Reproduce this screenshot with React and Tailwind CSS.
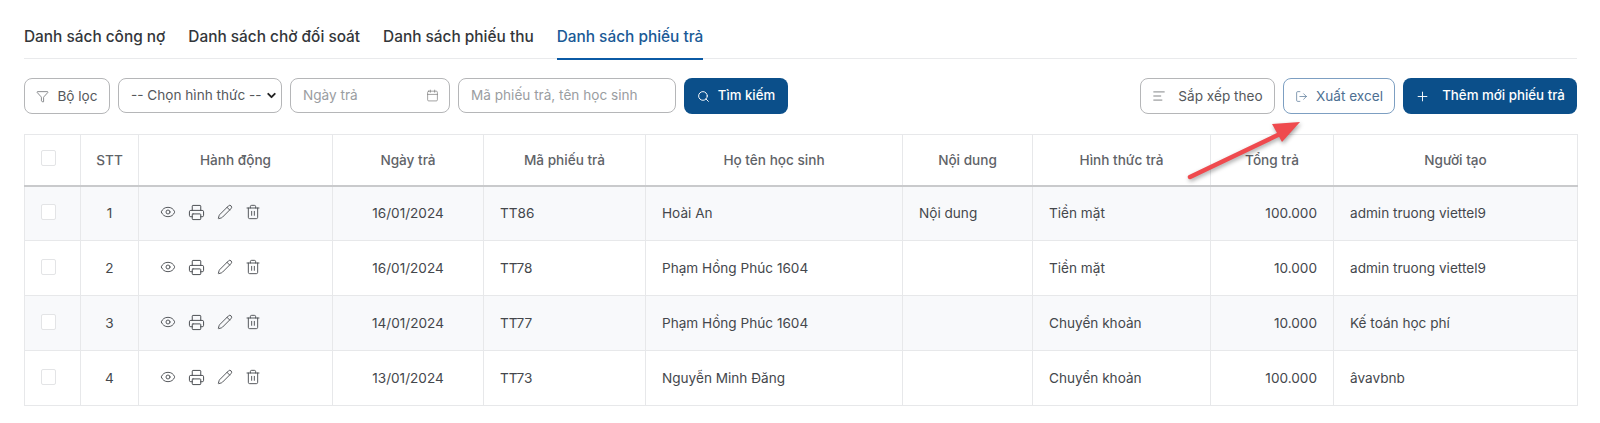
import React from "react";
import { Eye, Printer, Pencil, Trash2, Funnel, Calendar, Search, AlignLeft, LogOut, Plus, ChevronDown } from "lucide-react";

const rows = [
  ["1", "16/01/2024", "TT86", "Hoài An", "Nội dung", "Tiền mặt", "100.000", "admin truong viettel9", "bg-[#f8f9fb]"],
  ["2", "16/01/2024", "TT78", "Phạm Hồng Phúc 1604", "", "Tiền mặt", "10.000", "admin truong viettel9", "bg-white"],
  ["3", "14/01/2024", "TT77", "Phạm Hồng Phúc 1604", "", "Chuyển khoản", "10.000", "Kế toán học phí", "bg-[#f8f9fb]"],
  ["4", "13/01/2024", "TT73", "Nguyễn Minh Đăng", "", "Chuyển khoản", "100.000", "âvavbnb", "bg-white"],
];

const th = "border-r border-[#e7e8ea] font-medium text-[13.6px] text-[#5f6368] text-center";
const td = "border-r border-t border-[#e7e8ea] text-[13.6px] text-[#44474c] px-4";

function Checkbox() {
  return <div className="w-[15px] h-[16px] ml-4 -mt-[3px] bg-white border border-[#e3e4e6] rounded-[2px]" />;
}

export default function App() {
  return (
    <div className="relative w-[1600px] h-[423px] bg-white overflow-hidden font-['Inter',sans-serif] pl-6 pr-[23px]">
      <div className="flex gap-[23px] h-[59px] pt-[25px] border-b border-[#e9eaec] text-[15.4px] font-medium text-[#33363a]">
        <div>Danh sách công nợ</div>
        <div>Danh sách chờ đối soát</div>
        <div>Danh sách phiếu thu</div>
        <div className="h-[35px] text-[#1a5a96] border-b-2 border-[#0b5aa5]">Danh sách phiếu trả</div>
      </div>

      <div className="flex items-start justify-between mt-[19px] h-[37px] text-[13.6px]">
        <div className="flex gap-2">
          <button className="flex items-center gap-2 w-[86px] h-9 justify-center border border-[#b5b6b8] rounded-lg text-[#55585c]">
            <Funnel size={13} strokeWidth={1.25} />
            Bộ lọc
          </button>
          <div className="flex items-center justify-between w-[164px] h-[35px] pl-3 pr-[3px] border border-[#b5b6b8] rounded-lg text-[#55585c]">
            <span className="whitespace-nowrap">-- Chọn hình thức --</span>
            <ChevronDown size={13} strokeWidth={3.5} className="shrink-0 text-[#222]" />
          </div>
          <div className="flex items-center justify-between w-[160px] h-[35px] pl-3 pr-[10px] border border-[#b5b6b8] rounded-lg text-[#9a9da1]">
            <span>Ngày trả</span>
            <Calendar size={13} strokeWidth={1.25} className="text-[#777]" />
          </div>
          <div className="flex items-center w-[218px] h-[35px] px-3 border border-[#b5b6b8] rounded-lg text-[#9a9da1]">
            Mã phiếu trả, tên học sinh
          </div>
          <button className="flex items-center justify-center gap-2 w-[104px] h-9 rounded-lg bg-[#0b4f8a] text-white font-medium text-[13.2px]">
            <Search size={13} strokeWidth={1.75} />
            Tìm kiếm
          </button>
        </div>
        <div className="flex gap-2">
          <button className="flex items-center justify-center gap-3 w-[135px] h-9 border border-[#b5b6b8] rounded-lg text-[#55585c]">
            <AlignLeft size={14} strokeWidth={1.25} />
            Sắp xếp theo
          </button>
          <button className="flex items-center justify-center gap-2 w-[112px] h-9 border border-[#7d9fc2] rounded-lg text-[#4d6f92]">
            <LogOut size={13} strokeWidth={1.25} />
            Xuất excel
          </button>
          <button className="flex items-center justify-center gap-3 w-[174px] h-9 rounded-lg bg-[#0b4f8a] text-white font-medium text-[13.3px]">
            <Plus size={15} strokeWidth={1.5} />
            Thêm mới phiếu trả
          </button>
        </div>
      </div>

      <table className="mt-[19px] w-[1553px] table-fixed border-collapse border border-[#e7e8ea]">
        <colgroup>
          <col className="w-[56px]" />
          <col className="w-[58px]" />
          <col className="w-[194px]" />
          <col className="w-[151px]" />
          <col className="w-[162px]" />
          <col className="w-[257px]" />
          <col className="w-[130px]" />
          <col className="w-[178px]" />
          <col className="w-[123px]" />
          <col className="w-[244px]" />
        </colgroup>
        <thead>
          <tr className="h-[51px] border-b-2 border-[#c9cacc]">
            <th className={th + " text-left"}><Checkbox /></th>
            <th className={th}>STT</th>
            <th className={th}>Hành động</th>
            <th className={th}>Ngày trả</th>
            <th className={th}>Mã phiếu trả</th>
            <th className={th}>Họ tên học sinh</th>
            <th className={th}>Nội dung</th>
            <th className={th}>Hình thức trả</th>
            <th className={th}>Tổng trả</th>
            <th className={th}>Người tạo</th>
          </tr>
        </thead>
        <tbody>
          {rows.map((r) => (
            <tr key={r[0]} className={"h-[55px] " + r[8]}>
              <td className="border-r border-t border-[#e7e8ea]"><Checkbox /></td>
              <td className={td + " text-center"}>{r[0]}</td>
              <td className={td + " pl-[21px]"}>
                <div className="flex items-center gap-[12px] text-[#4a4d52] -mt-[2px]">
                  <Eye size={16} strokeWidth={1.4} />
                  <Printer size={17} strokeWidth={1.4} />
                  <Pencil size={16} strokeWidth={1.4} />
                  <Trash2 size={16} strokeWidth={1.4} />
                </div>
              </td>
              <td className={td + " text-center"}>{r[1]}</td>
              <td className={td}>{r[2]}</td>
              <td className={td}>{r[3]}</td>
              <td className={td}>{r[4]}</td>
              <td className={td}>{r[5]}</td>
              <td className={td + " text-right"}>{r[6]}</td>
              <td className={td}>{r[7]}</td>
            </tr>
          ))}
        </tbody>
      </table>

      <svg className="absolute left-[1180px] top-[115px] pointer-events-none drop-shadow-[1px_2px_2px_rgba(0,0,0,0.35)]" width="130" height="70" viewBox="0 0 130 70">
        <path d="M10 62 L100 19" stroke="#ef4a4e" strokeWidth="4.5" strokeLinecap="round" fill="none" />
        <path d="M120 7 L92 9 L102 27 Z" fill="#ef4a4e" />
      </svg>
    </div>
  );
}
